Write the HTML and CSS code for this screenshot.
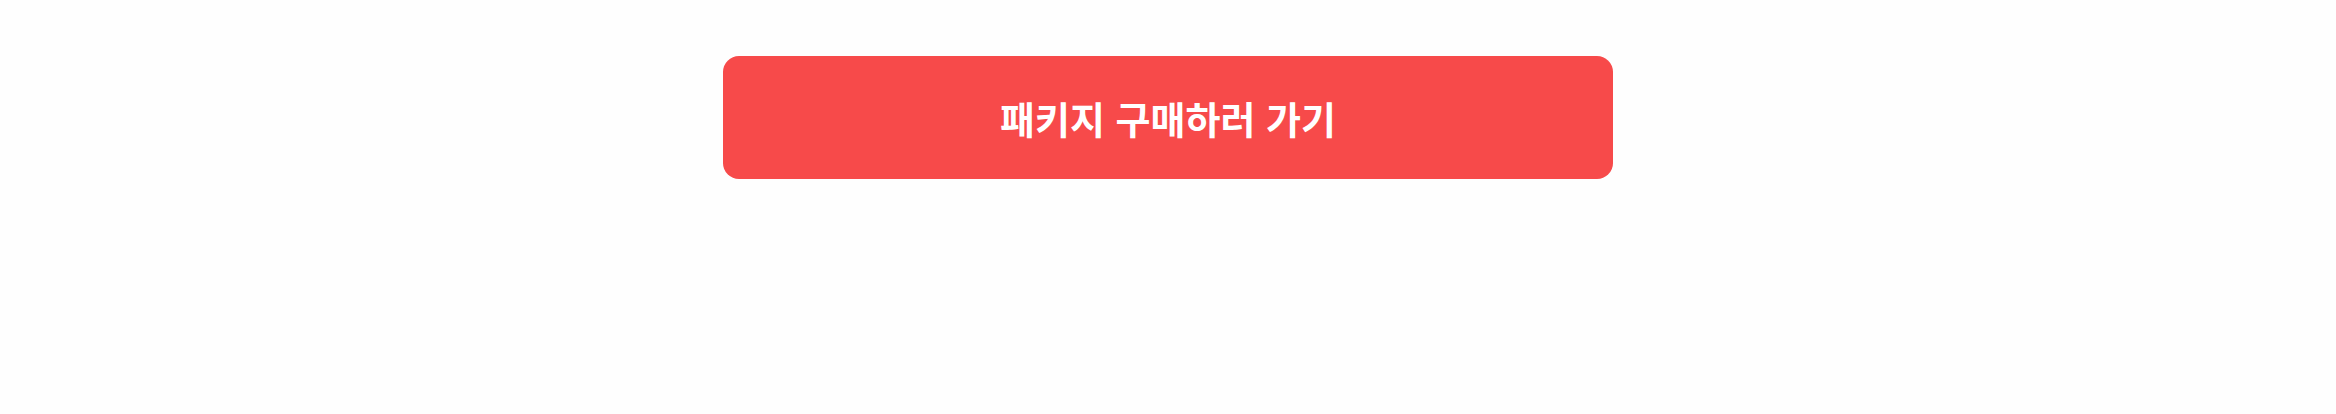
FILE: index.html
```html
<!DOCTYPE html>
<html lang="ko">
<head>
  <meta charset="UTF-8" />
  <title>패키지 구매</title>
  <meta name="viewport" content="width=device-width, initial-scale=1.0" />
  <link rel="stylesheet" href="styles.css">
</head>
<body>
  <div class="container">
    <button class="buy-btn">패키지 구매하러 가기</button>
  </div>
</body>
</html>
```

FILE: styles.css
```css
body {
  margin: 0;
  padding: 0;
  background: #fefefe;
  font-family: 'Noto Sans CJK KR', 'Noto Sans', sans-serif;
}

.container {
  display: flex;
  justify-content: center;
  padding-top: 56px;
}

.buy-btn {
  width: 890px;
  height: 123px;
  border: none;
  border-radius: 16px;
  background: #f74a4a;
  color: #fff;
  font-family: inherit;
  font-size: 38px;
  font-weight: 700;
  cursor: pointer;
}
```
